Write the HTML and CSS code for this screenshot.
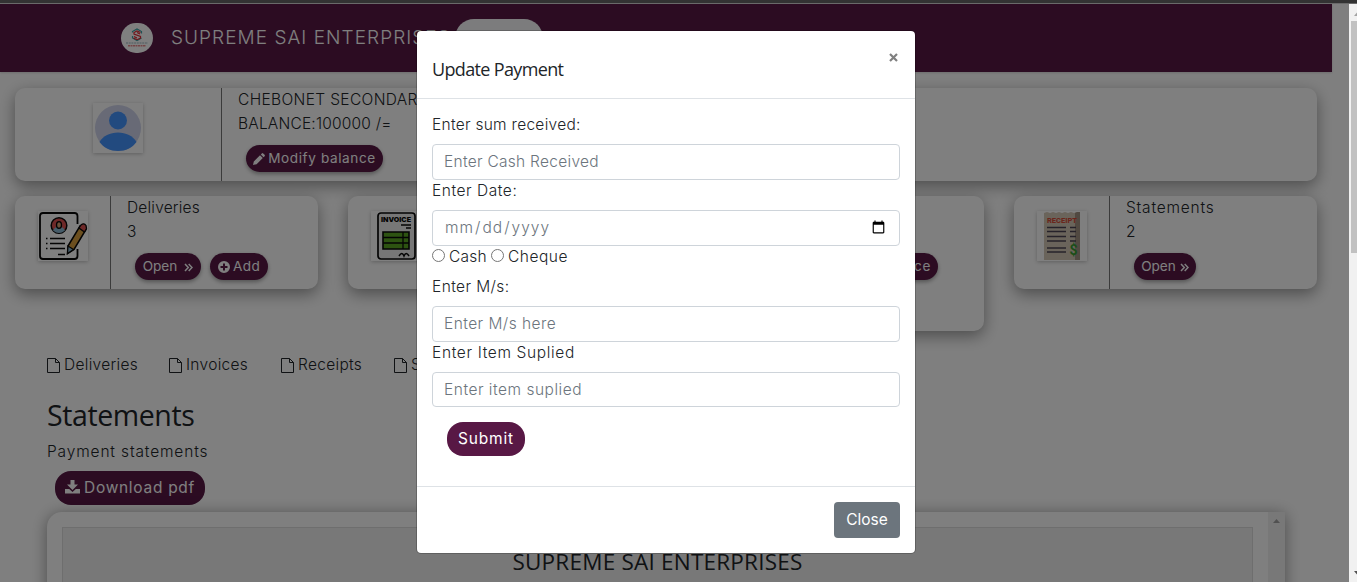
FILE: index.html
```html
<!DOCTYPE html>
<html lang="en">
<head>
<meta charset="utf-8">
<title>Supreme Sai Enterprises</title>
<link rel="stylesheet" href="styles.css">
</head>
<body>
<div class="topstrip"></div>
<div class="viewport">
  <div class="page">
    <header class="navbar">
      <svg class="logo" viewBox="0 0 32 30"><rect width="32" height="30" rx="15" fill="#fff"/><path d="M11.500 9.500v-1l4.500-2.500 4.500 2.500v2M11.500 13v2l4.500 2.500 4.500-2.500" fill="none" stroke="#3aa3a8" stroke-width="1.200"/><path d="M19.500 9.500l-3.500-1.500-3 1.500v1.500l6.500 2.500v1.500l-3.500 1.700-3.500-1.700M19 11l-3-1.500M13 13.500l3 1.500" fill="none" stroke="#e02a35" stroke-width="1.200"/><path d="M5 20h22" stroke="#bcd0d4" stroke-width="1.400" stroke-dasharray="2 .7"/><path d="M7 22.800h18" stroke="#e98a8c" stroke-width="1.600" stroke-dasharray="2 .5"/></svg>
      <span class="brand">SUPREME SAI ENTERPRISES</span>
      <button class="logout">Logout</button>
    </header>

    <section class="card school">
      <div class="thumb-col wide">
        <svg class="thumb" viewBox="0 0 50 50"><circle cx="25" cy="25" r="23" fill="#d0d4ec"/><circle cx="25" cy="17.500" r="9" fill="#4594ff"/><path d="M6.500 39C10 33 17 29.500 25 29.500S40 33 43.500 39C39 45 33 48 25 48S11 45 6.500 39z" fill="#4594ff"/></svg>
      </div>
      <div class="info">
        <div class="line caps">CHEBONET SECONDARY</div>
        <div class="line balance">BALANCE:100000 /=</div>
        <div class="actions"><button class="pill modify"><svg class="ic12" viewBox="0 0 12 12"><path d="M0 12l.8-3.600L7 2.200 9.800 5 3.600 11.200zM7.800 1.400L8.800.4q.7-.6 1.400 0l1.400 1.400q.7.7 0 1.400l-1 1z" fill="currentColor"/></svg><span>Modify balance</span></button></div>
      </div>
    </section>

    <section class="cards">
      <div class="card">
        <div class="thumb-col">
          <svg class="thumb" viewBox="0 0 50 50"><path d="M39.500 13V5q0-3-3-3H5Q2 2 2 5v40q0 3 3 3h31.500q3 0 3-3v-7" fill="none" stroke="#080808" stroke-width="1.800"/><circle cx="21" cy="14.500" r="7.800" fill="#dc5050" stroke="#080808" stroke-width="1.500"/><path d="M15 19.500q2-4 6-4t6 4q-6 5-12 0z" fill="#8bb8d2"/><ellipse cx="21" cy="14" rx="2.500" ry="3.300" fill="#d7a177" stroke="#080808" stroke-width="1.300"/><path d="M8 27.500h1.500M12 27.500h15M8 32.500h1.500M12 32.500h15M8 37.500h1.500M12 37.500h15M20 43.500h7" stroke="#080808" stroke-width="1.400"/><path d="M30 35L42 15l6 3.500-12 20-6.500 4z" fill="#d99f3e" stroke="#080808" stroke-width="1.500"/><path d="M41 17l2-3q3-2.500 5 .5l.5 3-2 3.500z" fill="#dc5050" stroke="#080808" stroke-width="1.300"/><path d="M30 35l5.500 3.500-6 4z" fill="#8bb8d2" stroke="#080808" stroke-width="1.200"/></svg>
        </div>
        <div class="info">
          <div class="line del">Deliveries</div><div class="line">3</div>
          <div class="actions"><button class="pill open-wide"><span>Open</span><svg class="chev" viewBox="0 0 9 9"><path d="M1 1l3.300 3.500L1 8M4.700 1L8 4.500 4.700 8" fill="none" stroke="currentColor" stroke-width="1.500"/></svg></button><button class="pill add"><svg class="ic12" viewBox="0 0 12 12"><path d="M6 0a6 6 0 100 12A6 6 0 006 0zM5 2.500h2V5h2.500v2H7v2.500H5V7H2.500V5H5z" fill="currentColor"/></svg><span>Add</span></button></div>
        </div>
      </div>
      <div class="card">
        <div class="thumb-col">
          <svg class="thumb" viewBox="0 0 50 50"><rect x="7" y="2" width="37" height="46" rx="3" fill="#eee" stroke="#080808" stroke-width="1.700"/><text class="inv" x="10" y="10.500" textLength="30" lengthAdjust="spacingAndGlyphs">INVOICE</text><path d="M30 14h10M35 17h5" stroke="#080808" stroke-width="1.300"/><path d="M12 21h26v17H12z" fill="#5aa623" stroke="#080808" stroke-width="1.600"/><path d="M12 26.500h26M12 32h26M32 21v17" stroke="#080808" stroke-width="1.300"/><path d="M28 45q3-5 5 0 2-5 5 0" fill="none" stroke="#080808" stroke-width="1.500"/></svg>
        </div>
        <div class="info"><div class="line">Invoices</div></div>
      </div>
      <div class="card tall">
        <div class="thumb-col"></div>
        <div class="info">
          <div class="line">Receipts</div><div class="line">2</div>
          <div class="actions"><button class="pill receipt"><span>Update balance</span></button></div>
        </div>
      </div>
      <div class="card">
        <div class="thumb-col">
          <svg class="thumb" viewBox="0 0 50 50"><path d="M7 2l3-1 3 1 3-1 3 1 3-1 3 1 3-1 3 1 3-1 3 1 3-1 3 0v48H7z" fill="#d5c8b6"/><path d="M38 2l2-1 3 0v48h-5z" fill="#a29382"/><text class="rec" x="10" y="11.500" textLength="30" lengthAdjust="spacingAndGlyphs">RECEIPT</text><path d="M10 16.500h19M10 20.500h19M10 25.500h19M10 30h19M10 37h19M10 41h19M33 16.500h6M33 20.500h6M33 25.500h6M33 30h6" stroke="#4d4554" stroke-width="1.500"/><text class="dollar" x="32.500" y="44">$</text></svg>
        </div>
        <div class="info">
          <div class="line stm">Statements</div><div class="line">2</div>
          <div class="actions"><button class="pill open"><span>Open</span><svg class="chev" viewBox="0 0 9 9"><path d="M1 1l3.300 3.500L1 8M4.700 1L8 4.500 4.700 8" fill="none" stroke="currentColor" stroke-width="1.500"/></svg></button></div>
        </div>
      </div>
    </section>

    <main class="content">
      <nav class="tabs">
        <a class="tab t1"><svg class="file" viewBox="0 0 13 15"><path d="M.5.500H8.500L12.500 4.500V14.500H.5zM8.500.500V4.500H12.500" fill="none" stroke="currentColor"/></svg>Deliveries</a>
        <a class="tab t2"><svg class="file" viewBox="0 0 13 15"><path d="M.5.500H8.500L12.500 4.500V14.500H.5zM8.500.500V4.500H12.500" fill="none" stroke="currentColor"/></svg>Invoices</a>
        <a class="tab t3"><svg class="file" viewBox="0 0 13 15"><path d="M.5.500H8.500L12.500 4.500V14.500H.5zM8.500.500V4.500H12.500" fill="none" stroke="currentColor"/></svg>Receipts</a>
        <a class="tab t4"><svg class="file" viewBox="0 0 13 15"><path d="M.5.500H8.500L12.500 4.500V14.500H.5zM8.500.500V4.500H12.500" fill="none" stroke="currentColor"/></svg>S</a>
      </nav>
      <h2 class="heading">Statements</h2>
      <p class="sub">Payment statements</p>
      <button class="download"><svg class="dl" viewBox="0 0 15 14"><path d="M5.500 0h4v4.500H13L7.500 10 2 4.500h3.500zM0 9h4.200l3.300 3 3.300-3H15v4.500H0z" fill="currentColor"/></svg><span>Download pdf</span></button>
      <div class="panel">
        <div class="sheet"><h3 class="sheet-title">SUPREME SAI ENTERPRISES</h3></div>
        <div class="panel-scroll"><svg viewBox="0 0 7 4"><path d="M0 4L3.500 0 7 4z" fill="currentColor"/></svg></div>
      </div>
    </main>
    <div class="backdrop"></div>
  </div>
  <div class="scrollbar"><svg class="up" viewBox="0 0 7 4"><path d="M0 4L3.500 0 7 4z" fill="#a3a3a3"/></svg><div class="thumbbar"></div><svg class="down" viewBox="0 0 7 4"><path d="M0 0L3.500 4 7 0z" fill="#505050"/></svg></div>
</div>

<div class="modal">
  <div class="modal-header"><h4 class="modal-title">Update Payment</h4><button class="x"><svg viewBox="0 0 9 9"><path d="M1 1l7 7M8 1L1 8" stroke="#808080" stroke-width="2.200"/></svg></button></div>
  <form class="modal-body">
    <label class="lbl l1">Enter sum received:</label>
    <input class="field f1" placeholder="Enter Cash Received">
    <label class="lbl l2">Enter Date:</label>
    <input class="field date" type="date">
    <div class="radios"><input type="radio" name="m"><span class="r1">Cash</span><input type="radio" name="m"><span class="r2">Cheque</span></div>
    <label class="lbl l3">Enter M/s:</label>
    <input class="field f3" placeholder="Enter M/s here">
    <label class="lbl l4">Enter Item Suplied</label>
    <input class="field f4" placeholder="Enter item suplied">
    <button class="submit" type="button">Submit</button>
  </form>
  <div class="modal-footer"><button class="close">Close</button></div>
</div>
</body>
</html>
```
FILE: styles.css
```css
* { box-sizing: border-box; }
body {
  margin: 0; height: 582px; overflow: hidden; display: flex; flex-direction: column;
  font: 300 15.500px/24px Inter, "Open Sans", sans-serif; color: #212529; background: #fff;
}
button { font: inherit; border: 0; margin: 0; padding: 0; white-space: nowrap; }
h2, h3, h4, p { margin: 0; font-weight: 400; }
svg { display: block; flex: none; }

.topstrip { height: 4px; flex: none; background: #333; border-bottom: 1px solid #6a6a6a; }
.viewport { flex: 1; display: flex; min-height: 0; }
.page { position: relative; width: 1349px; overflow: hidden; }
.backdrop { position: absolute; inset: 0; background: rgba(0, 0, 0, .5); }

.navbar { width: 1332px; height: 68px; background: #581845; display: flex; align-items: flex-start; padding: 15px 0 0 121px; box-shadow: 0 1px 2px rgba(0, 0, 0, .15); }
.logo { width: 32px; height: 30px; margin-top: 4px; }
.brand { width: 268px; margin: 7px 0 0 18px; color: #fff; font-size: 19px; letter-spacing: 1.050px; white-space: nowrap; }
.logout { width: 88px; height: 38px; margin-left: 16px; border-radius: 19px; background: #f8f9fa; font-size: 15px; }

.card { display: flex; height: 93px; background: #fff; border-radius: 10px; box-shadow: 0 5px 16px rgba(0, 0, 0, .4); }
.school { width: 1302px; margin: 16px 0 0 15px; }
.cards { display: grid; grid-template-columns: repeat(4, 303px); gap: 30px; align-items: start; margin: 15px 0 0 15px; height: 135px; }
.tall { height: 135px; }
.thumb-col { width: 96px; border-right: 1px solid #777; padding: 15px 0 0 23px; }
.wide { width: 207px; padding-left: 78px; }
.thumb { width: 50px; height: 50px; box-shadow: 0 1px 4px rgba(0, 0, 0, .25); }
.info { padding-left: 16px; }
.line { height: 24px; white-space: nowrap; }
.caps { letter-spacing: .35px; }
.balance { letter-spacing: .2px; }
.del { letter-spacing: .2px; }
.stm { letter-spacing: .8px; }
.actions { display: flex; gap: 9px; padding: 9px 0 0 8px; }
.pill { height: 27px; border-radius: 14px; background: #581845; color: #fff; font-size: 13.600px; font-weight: 400; line-height: 25px; display: flex; align-items: center; justify-content: center; box-shadow: 0 2px 4px rgba(0, 0, 0, .35); }
.pill span { margin-top: -1px; }
.ic12 { width: 12px; height: 12px; margin-right: 4px; }
.chev { width: 9px; height: 9px; margin: 1px 0 0 4px; }
.modify { width: 137px; letter-spacing: .6px; }
.modify .ic12 { margin-right: 3px; }
.open-wide { width: 66px; } .open-wide .chev { margin-left: 7px; }
.add { width: 58px; letter-spacing: .4px; } .add .ic12 { margin-right: 3px; }
.open { width: 62px; }
.receipt { width: 137px; justify-content: flex-end; padding-right: 7px; letter-spacing: .6px; }
.inv { font: 900 6.500px Inter, sans-serif; fill: #080808; }
.rec { font: 800 8px Roboto, sans-serif; fill: #d54c36; }
.dollar { font: 700 14px Roboto, sans-serif; fill: #379d32; }

.content { padding: 22px 0 0 47px; }
.tabs { display: flex; height: 24px; letter-spacing: .3px; }
.tab { display: flex; align-items: center; white-space: nowrap; }
.file { width: 13px; height: 15px; margin-right: 4px; }
.t1 { width: 122px; } .t2 { width: 112px; } .t3 { width: 113px; }
.heading { font: 400 28.500px/36px "Open Sans", sans-serif; letter-spacing: -.4px; margin-top: 20px; height: 43px; }
.sub { height: 31px; font-weight: 300; letter-spacing: .85px; }
.download { display: flex; align-items: center; justify-content: center; gap: 4px; width: 150px; height: 34px; margin-left: 8px; border-radius: 16px; background: #581845; color: #fff; font-weight: 400; font-size: 15.500px; letter-spacing: .7px; }
.download span { margin-top: -1px; }
.dl { width: 15px; height: 14px; margin-top: -2px; }
.panel { width: 1238px; height: 200px; margin-top: 7px; padding: 15px 0 0 15px; display: flex; border-radius: 15px 0 0 0; background: #fff; box-shadow: 0 2px 16px rgba(0, 0, 0, .4); }
.sheet { width: 1191px; height: 180px; border: 1px solid #dcdcdc; background: #f1f1f1; text-align: center; padding-top: 18px; }
.sheet-title { font: 400 22.500px/32px "Open Sans", sans-serif; letter-spacing: .22px; white-space: nowrap; }
.panel-scroll { width: 17px; height: 200px; margin: -15px 0 0 15px; padding: 7px 0 0 5px; background: #f1f1f1; color: #a3a3a3; }
.panel-scroll svg { width: 7px; height: 4px; }

.scrollbar { width: 8px; background: #f1f1f1; padding-left: 2px; overflow: hidden; display: flex; flex-direction: column; }
.up { width: 7px; height: 4px; margin: 8px 0 5px 3px; }
.thumbbar { height: 232px; background: #c1c1c1; flex: none; }
.down { width: 7px; height: 4px; margin: auto 0 7px 3px; }

.modal { position: absolute; left: 416px; top: 30px; width: 500px; height: 524px; background: #fff; background-clip: padding-box; border: 1px solid rgba(0, 0, 0, .2); border-radius: 5px; }
.modal-header { height: 68px; display: flex; justify-content: space-between; padding: 23px 17px 0 15px; border-bottom: 1px solid #dee2e6; }
.modal-title { font: 400 18px/30px "Open Sans", sans-serif; letter-spacing: -.65px; }
.x { background: none; height: 9px; margin-top: -1px; }
.x svg { width: 9px; height: 9px; }
.modal-body { height: 387px; padding: 14px 15px 0; }
.lbl { display: block; height: 31px; line-height: 24px; }
.field { display: block; width: 468px; height: 36px; margin: 0; padding: 0 11px 1px; border: 1px solid #ced4da; border-radius: 4px; background: #fff; color: #6c757d; font: inherit; }
.field + .lbl { height: 30px; line-height: 22px; }
.field::placeholder { color: #6c757d; opacity: 1; }
.l1, .f1 { letter-spacing: .28px; }
.l2 { letter-spacing: .55px; }
.date { letter-spacing: 1px; padding-bottom: 0; }
.l3 { letter-spacing: .4px; }
.f3 { letter-spacing: .45px; }
.l4 { letter-spacing: .65px; }
.f4 { height: 35px; letter-spacing: .52px; padding-bottom: 0; }
.r1 { letter-spacing: .25px; }
.r2 { letter-spacing: .55px; }
.radios { display: flex; height: 29px; line-height: 22px; }
.radios input { width: 13px; height: 13px; margin: 3px 4px 0 0; }
.radios span { margin-right: 4px; }
.radios + .lbl { height: 31px; }
.submit { display: block; width: 78px; height: 34px; margin: 15px 0 0 15px; border-radius: 16px; background: #581845; color: #fff; font-weight: 400; letter-spacing: .8px; }
.modal-footer { height: 67px; padding: 15px; border-top: 1px solid #dee2e6; display: flex; justify-content: flex-end; }
.close { width: 66px; height: 36px; background: #6c757d; color: #fff; border-radius: 4px; font-weight: 400; }
```
